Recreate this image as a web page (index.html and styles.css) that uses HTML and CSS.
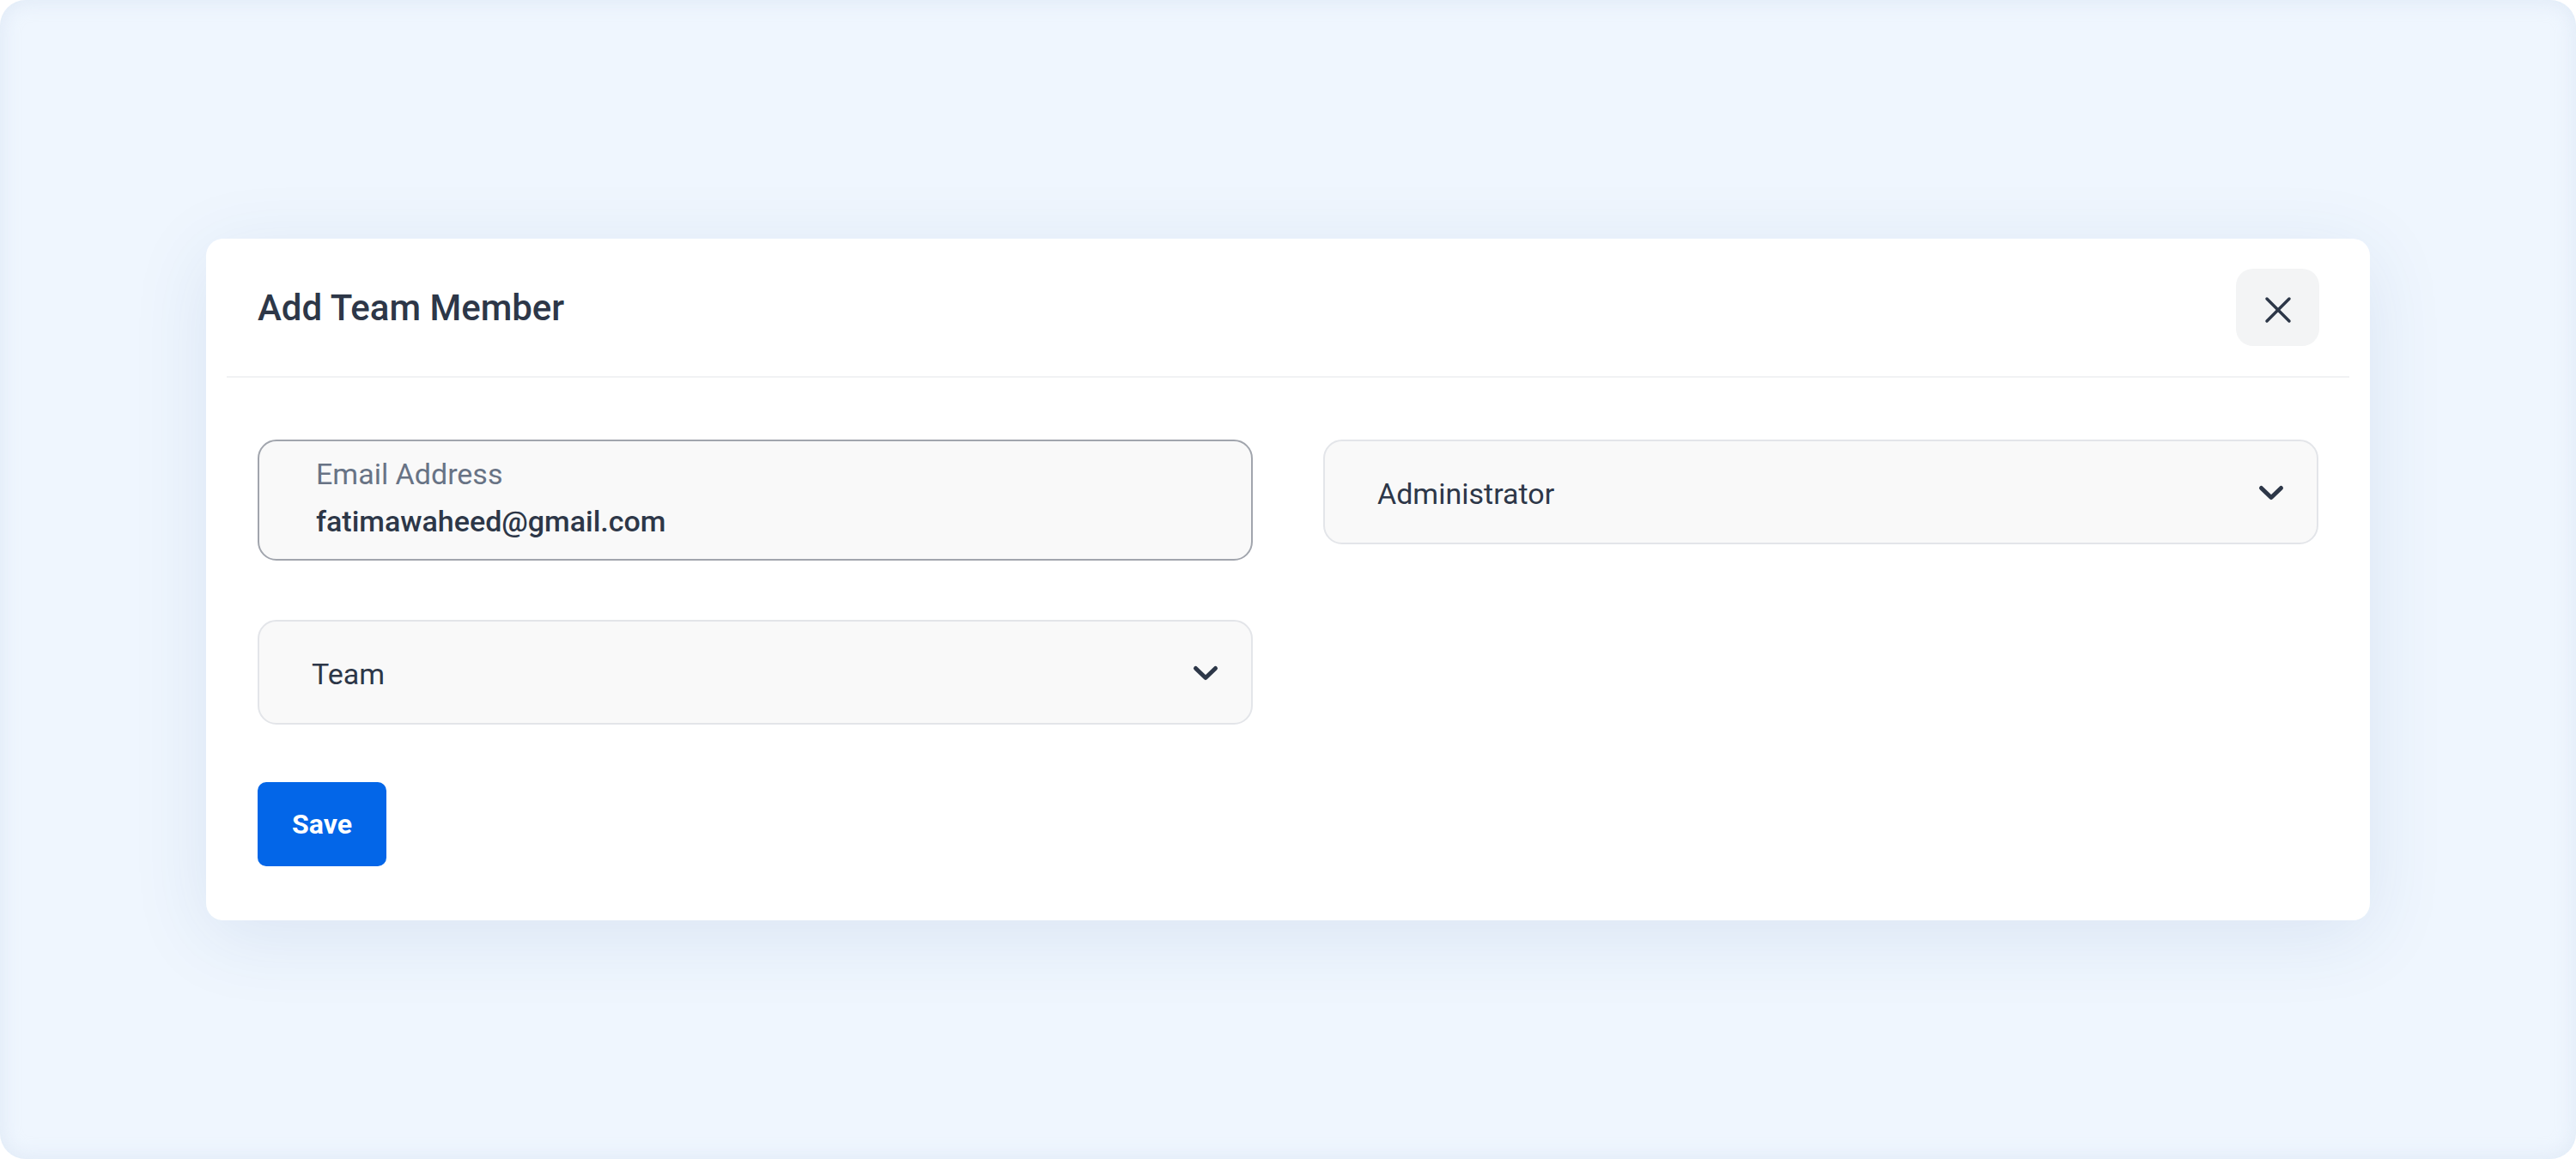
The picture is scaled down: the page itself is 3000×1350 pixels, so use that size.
FILE: index.html
```html
<!DOCTYPE html>
<html lang="en">
<head>
    <meta charset="UTF-8">
    <meta name="viewport" content="width=device-width, initial-scale=1.0">
    <title>Add Team Member</title>

    <link rel="stylesheet" href="styles.css">
</head>
<body>
    <div class="page">
        <div class="modal">
            <div class="modal-header">
                <h2 class="modal-title">Add Team Member</h2>
                <button class="btn-close" type="button" aria-label="Close">
                    <svg width="32" height="32" viewBox="0 0 32 32" fill="none" stroke="#2d3748" stroke-width="3.5" stroke-linecap="round">
                        <line x1="3" y1="3" x2="29" y2="29"/>
                        <line x1="29" y1="3" x2="3" y2="29"/>
                    </svg>
                </button>
            </div>

            <form class="modal-body">
                <div class="form-grid">
                    <label class="field field-active">
                        <span class="field-label">Email Address</span>
                        <input class="field-input" type="email" value="fatimawaheed@gmail.com">
                    </label>

                    <div class="field field-select">
                        <select class="select-input">
                            <option>Administrator</option>
                            <option>Editor</option>
                            <option>Viewer</option>
                        </select>
                        <svg class="chevron" width="32" height="20" viewBox="0 0 32 20" fill="none" stroke="#2d3748" stroke-width="5" stroke-linecap="round" stroke-linejoin="round">
                            <polyline points="4.5,4.5 16,15.5 27.5,4.5"/>
                        </svg>
                    </div>

                    <div class="field field-select">
                        <select class="select-input">
                            <option>Team</option>
                            <option>Design</option>
                            <option>Development</option>
                        </select>
                        <svg class="chevron" width="32" height="20" viewBox="0 0 32 20" fill="none" stroke="#2d3748" stroke-width="5" stroke-linecap="round" stroke-linejoin="round">
                            <polyline points="4.5,4.5 16,15.5 27.5,4.5"/>
                        </svg>
                    </div>
                </div>

                <button class="btn-save" type="submit">Save</button>
            </form>
        </div>
    </div>
</body>
</html>
```

FILE: styles.css
```css
body {
    margin: 0;
    background: #fff;
    font-family: Roboto, "Liberation Sans", Arial, sans-serif;
}

.page {
    width: 3000px;
    height: 1350px;
    display: flex;
    justify-content: center;
    align-items: center;
    background: #eff6fe;
    border-radius: 30px;
    box-shadow: inset 0 0 20px 4px rgba(200, 214, 236, 0.35);
}

.modal {
    width: 2520px;
    background: #fff;
    border-radius: 20px;
    box-shadow: 0 18px 90px rgba(40, 80, 150, 0.1);
}

.modal-header {
    display: flex;
    justify-content: space-between;
    align-items: center;
    height: 160px;
    margin: 0 24px;
    padding: 0 35px 0 36px;
    border-bottom: 2px solid #f1f2f4;
}

.modal-title {
    margin: 0;
    font-size: 42px;
    font-weight: 500;
    color: #2d3748;
}

.btn-close {
    display: flex;
    justify-content: center;
    align-items: center;
    width: 97px;
    height: 90px;
    padding: 6px 0 0;
    border: none;
    border-radius: 20px;
    background: #f3f4f5;
    cursor: pointer;
}

.modal-body {
    padding: 72px 60px 63px;
}

.form-grid {
    display: grid;
    grid-template-columns: 1fr 1fr;
    column-gap: 82px;
    row-gap: 69px;
    align-items: start;
}

.field {
    box-sizing: border-box;
    display: flex;
    background: #f9f9f9;
    border: 2px solid #e3e5e9;
    border-radius: 22px;
}

.field-active {
    flex-direction: column;
    height: 141px;
    padding: 18px 66px 0;
    border-color: #a1a5ad;
}

.field-label {
    font-size: 34px;
    line-height: 40px;
    color: #687385;
}

.field-input {
    margin-top: 15px;
    padding: 0;
    border: none;
    outline: none;
    background: transparent;
    font-family: inherit;
    font-size: 34px;
    font-weight: 500;
    line-height: 40px;
    color: #2d3748;
}

.field-select {
    align-items: center;
    height: 122px;
    padding: 0 37px 0 61px;
}

.select-input {
    flex: 1;
    height: 100%;
    padding: 4px 0 0;
    border: none;
    outline: none;
    background: transparent;
    appearance: none;
    font-family: inherit;
    font-size: 34px;
    color: #2d3748;
}

.chevron {
    margin-top: 2px;
    pointer-events: none;
}

.btn-save {
    margin-top: 67px;
    width: 150px;
    height: 98px;
    border: none;
    border-radius: 10px;
    background: #0366e8;
    color: #fff;
    font-family: inherit;
    font-size: 32px;
    font-weight: 700;
    cursor: pointer;
}
```
